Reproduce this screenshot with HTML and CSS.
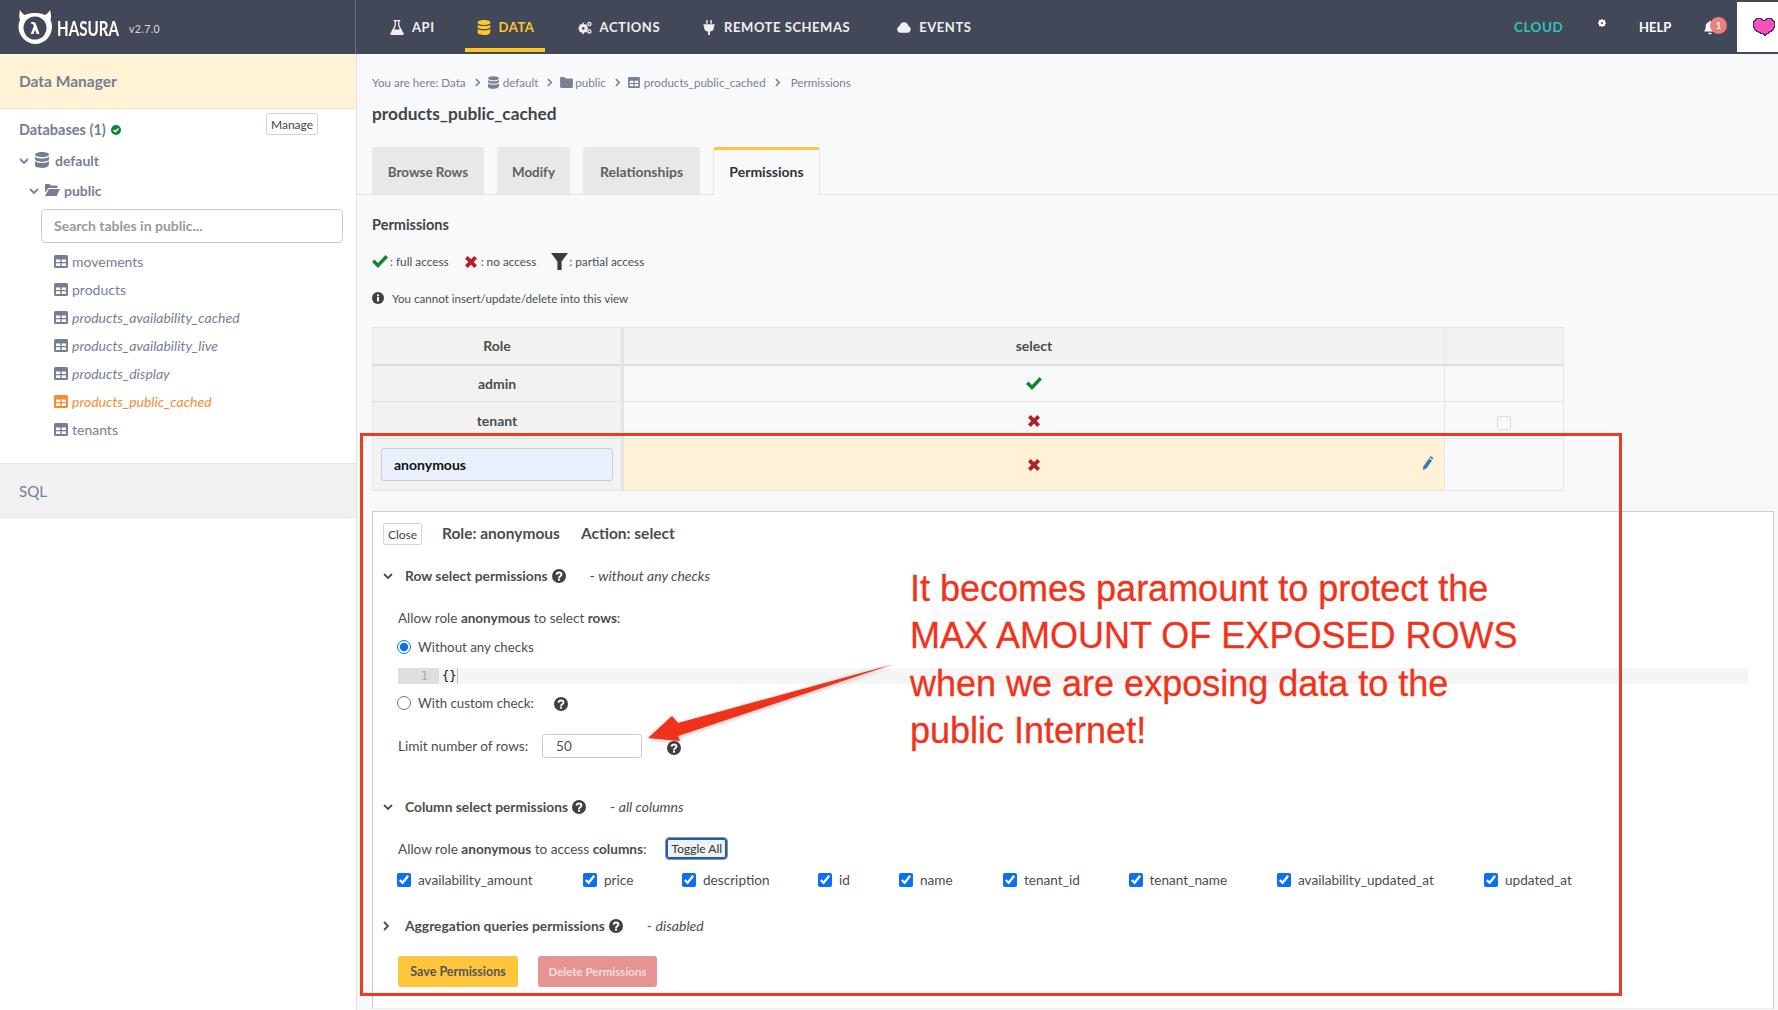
FILE: index.html
```html
<!DOCTYPE html>
<html>
<head>
    <title>Hasura Console</title>
    <link rel="stylesheet" href="styles.css">
</head>
<body>
<svg class="defs" width="0" height="0">
    <symbol id="i-db" viewBox="0 0 14 16"><path fill="currentColor" d="M7 0c3.900 0 7 1.100 7 2.600S10.900 5.200 7 5.200 0 4 0 2.600 3.100 0 7 0zM0 4.700c1.300 1.200 4 1.800 7 1.800s5.700-.6 7-1.800v2.500C14 8.600 10.900 9.700 7 9.700S0 8.600 0 7.200zM0 9.200C1.300 10.400 4 11 7 11s5.700-.6 7-1.800v2.400C14 15 10.900 16 7 16s-7-1-7-2.400z"/></symbol>
    <symbol id="i-table" viewBox="0 0 14 13"><path fill="currentColor" fill-rule="evenodd" d="M1.500 0h11A1.500 1.500 0 0 1 14 1.500v10a1.500 1.500 0 0 1-1.500 1.500h-11A1.500 1.500 0 0 1 0 11.500v-10A1.500 1.500 0 0 1 1.500 0zM2 4.500V7h4.300V4.500zm5.700 0V7H12V4.500zM2 8.300v2.700h4.300V8.300zm5.700 0v2.700H12V8.300z"/></symbol>
    <symbol id="i-folder" viewBox="0 0 14 12"><path fill="currentColor" d="M1.300 0h3.400l1.400 1.600h6.600c.7 0 1.300.6 1.300 1.300v7.800c0 .7-.6 1.300-1.300 1.300H1.300C.6 12 0 11.400 0 10.700V1.300C0 .6.600 0 1.300 0z"/></symbol>
    <symbol id="i-open" viewBox="0 0 15 12"><path fill="currentColor" d="M1 0h3.500L6 1.600h5.500c.6 0 1 .4 1 1V4H3.500L0 8.800V1C0 .4.400 0 1 0zM3.900 5H15l-3.300 7H0z"/></symbol>
    <symbol id="i-help" viewBox="0 0 16 16"><circle cx="8" cy="8" r="8" fill="currentColor"/><path fill="none" stroke="#fff" stroke-width="2.200" d="M5.200 6.300C5.400 4.700 6.600 4 8 4c1.600 0 2.800 1 2.800 2.300 0 2-2.800 2-2.800 3.900"/><rect x="6.800" y="11" width="2.400" height="2.300" fill="#fff"/></symbol>
    <symbol id="i-chev" viewBox="0 0 10 7"><path fill="none" stroke="currentColor" stroke-width="1.800" d="M1 1l4 4 4-4"/></symbol>
    <symbol id="i-right" viewBox="0 0 7 10"><path fill="none" stroke="currentColor" stroke-width="1.800" d="M1 1l4 4-4 4"/></symbol>
    <symbol id="i-check" viewBox="0 0 16 13"><path fill="currentColor" d="M0 7l2.500-2.400 3.500 3.500L13.500 0 16 2.400 6 13z"/></symbol>
    <symbol id="i-x" viewBox="0 0 12 12"><path fill="currentColor" d="M2.700 0L6 3.300 9.300 0 12 2.700 8.700 6 12 9.300 9.300 12 6 8.700 2.700 12 0 9.300 3.300 6 0 2.700z"/></symbol>
</svg>

<header class="topbar">
    <div class="brand">
        <svg class="logo" viewBox="0 0 34 36">
            <path fill="#fff" d="M2 1c2 3 3 4 5 5 3-1.500 6.500-2 10-2s7 .5 10 2c2-1 3-2 5-5 1 4 1.500 7 .5 10 1 2 1.500 4.500 1.500 7 0 9-7.500 17-16.500 17S.500 27 .500 18c0-2.500.5-5 1.500-7C1 8 1 5 2 1z"/>
            <circle cx="17" cy="19" r="11.500" fill="#434859"/>
            <text x="17" y="25" class="logo-l">λ</text>
        </svg>
        <span class="brand-name">HASURA</span>
        <span class="brand-ver">v2.7.0</span>
    </div>
    <nav class="nav">
        <a class="nav-item nav-api">
            <svg class="nav-ico" viewBox="0 0 14 16"><path fill="currentColor" d="M3.500 0h7v1.300H9.600v4.500L14 14c.5 1-.2 2-1.200 2H1.200C.2 16-.5 15 0 14l4.400-8.200V1.300h-.9zm2.300 1.300V6.200L4 10h6L8.200 6.200V1.300z"/></svg>API</a>
        <a class="nav-item nav-data active">
            <svg class="nav-ico" viewBox="0 0 14 16"><use href="#i-db"/></svg>DATA</a>
        <a class="nav-item nav-actions">
            <svg class="nav-ico" viewBox="0 0 16 14"><circle cx="6" cy="8" r="3.700" fill="none" stroke="currentColor" stroke-width="2.600"/><path stroke="currentColor" stroke-width="1.800" d="M6 1.500v13M.5 8h11M2 4l8 8M10 4l-8 8"/><circle cx="6" cy="8" r="1.500" fill="#434859"/><circle cx="13" cy="3" r="1.800" fill="none" stroke="currentColor" stroke-width="1.500"/><circle cx="13" cy="11.500" r="1.800" fill="none" stroke="currentColor" stroke-width="1.500"/></svg>ACTIONS</a>
        <a class="nav-item nav-remote">
            <svg class="nav-ico" viewBox="0 0 12 16"><path fill="currentColor" d="M3 0h1.500v4H3zM7.500 0H9v4H7.500zM0 4.500h12V6h-.8v2.500c0 2-2 3.500-4.200 3.800V16H5v-3.700C2.800 12 .8 10.500.8 8.500V6H0z"/></svg>REMOTE SCHEMAS</a>
        <a class="nav-item nav-events">
            <svg class="nav-ico" viewBox="0 0 16 12"><path fill="currentColor" d="M4 12a4 4 0 0 1-1-7.800C3.400 1.800 5.500 0 8 0c2.600 0 4.700 1.800 5 4.300A4 4 0 0 1 12.500 12z"/></svg>EVENTS</a>
    </nav>
    <div class="nav-right">
        <a class="cloud">CLOUD</a>
        <svg class="gear" viewBox="0 0 10 10"><circle cx="5" cy="5" r="3" fill="none" stroke="#fff" stroke-width="2"/><path stroke="#fff" stroke-width="1.600" d="M5 0v10M0 5h10M1.500 1.500l7 7M8.500 1.500l-7 7"/><circle cx="5" cy="5" r="1.300" fill="#434859"/></svg>
        <a class="help">HELP</a>
        <div class="bell">
            <svg class="bell-ico" viewBox="0 0 14 16"><path fill="#fff" d="M7 0c.6 0 1 .4 1 1v.6c2.300.5 4 2.500 4 5 0 3 .6 4.500 2 6H0c1.400-1.500 2-3 2-6 0-2.500 1.700-4.500 4-5V1c0-.6.400-1 1-1zM5 14h4c0 1.200-.9 2-2 2s-2-.8-2-2z"/></svg>
            <span class="badge">1</span>
        </div>
        <div class="heart-box">
            <svg class="heart" viewBox="0 0 23 20" shape-rendering="crispEdges"><path fill="#f553b8" stroke="#4b2a8c" stroke-width="1" d="M1 4h1V3h1V2h1V1h5v1h1v1h3V2h1V1h5v1h1v1h1v1h1v6h-1v2h-1v1h-1v1h-2v1h-1v1h-2v1h-1v1h-1v-1h-1v-1H8v-1H6v-1H4v-1H3v-1H2v-2H1z"/></svg>
        </div>
    </div>
</header>

<div class="page">
    <aside class="sidebar">
        <div class="side-title">Data Manager</div>
        <div class="db-head">
            <span class="db-label">Databases (1)
                <svg class="db-ok" viewBox="0 0 10 10"><circle cx="5" cy="5" r="5" fill="#0b8a2c"/><path fill="none" stroke="#fff" stroke-width="1.600" d="M2.700 5.100l1.700 1.600 3-3.200"/></svg>
            </span>
            <button class="btn-manage">Manage</button>
        </div>
        <div class="tree-row tree-default">
            <svg class="tree-chev"><use href="#i-chev"/></svg>
            <svg class="tree-db"><use href="#i-db"/></svg>
            <span>default</span>
        </div>
        <div class="tree-row tree-public">
            <svg class="tree-chev"><use href="#i-chev"/></svg>
            <svg class="tree-open"><use href="#i-open"/></svg>
            <span>public</span>
        </div>
        <div class="side-search">Search tables in public...</div>
        <ul class="table-list">
            <li><svg class="tbl-ico"><use href="#i-table"/></svg>movements</li>
            <li><svg class="tbl-ico"><use href="#i-table"/></svg>products</li>
            <li class="view"><svg class="tbl-ico"><use href="#i-table"/></svg>products_availability_cached</li>
            <li class="view"><svg class="tbl-ico"><use href="#i-table"/></svg>products_availability_live</li>
            <li class="view"><svg class="tbl-ico"><use href="#i-table"/></svg>products_display</li>
            <li class="view current"><svg class="tbl-ico"><use href="#i-table"/></svg>products_public_cached</li>
            <li><svg class="tbl-ico"><use href="#i-table"/></svg>tenants</li>
        </ul>
        <div class="side-sql">SQL</div>
    </aside>

    <main class="main">
        <div class="crumbs">
            <span>You are here: Data</span>
            <svg class="c-sep"><use href="#i-right"/></svg>
            <svg class="c-db"><use href="#i-db"/></svg><span>default</span>
            <svg class="c-sep"><use href="#i-right"/></svg>
            <svg class="c-folder"><use href="#i-folder"/></svg><span>public</span>
            <svg class="c-sep"><use href="#i-right"/></svg>
            <svg class="c-table"><use href="#i-table"/></svg><span>products_public_cached</span>
            <svg class="c-sep"><use href="#i-right"/></svg>
            <span class="c-last">Permissions</span>
        </div>
        <h1 class="page-title">products_public_cached</h1>

        <div class="tabs">
            <a class="tab tab-browse">Browse Rows</a>
            <a class="tab tab-modify">Modify</a>
            <a class="tab tab-rel">Relationships</a>
            <a class="tab tab-perm active">Permissions</a>
        </div>

        <h2 class="sub-title">Permissions</h2>
        <div class="legend">
            <svg class="lg-check"><use href="#i-check"/></svg><span>: full access</span>
            <svg class="lg-x"><use href="#i-x"/></svg><span>: no access</span>
            <svg class="lg-filter" viewBox="0 0 16 16"><path fill="#3c3c3c" d="M0 0h16L10 8v8H6V8z"/></svg><span>: partial access</span>
        </div>
        <div class="info">
            <svg class="info-ico" viewBox="0 0 12 12"><circle cx="6" cy="6" r="6" fill="#3f3f3f"/><rect x="5" y="5" width="2" height="4.500" fill="#fff"/><rect x="5" y="2.400" width="2" height="1.800" fill="#fff"/></svg>
            You cannot insert/update/delete into this view
        </div>

        <table class="perm-table">
            <colgroup><col class="col-role"><col class="col-sel"><col class="col-x"></colgroup>
            <tr class="r-head"><th class="role">Role</th><th>select</th><th></th></tr>
            <tr class="r-row"><td class="role">admin</td><td class="mid"><svg class="t-check"><use href="#i-check"/></svg></td><td></td></tr>
            <tr class="r-row"><td class="role">tenant</td><td class="mid"><svg class="t-x"><use href="#i-x"/></svg></td><td class="mid"><span class="ghost-box"></span></td></tr>
            <tr class="r-new">
                <td class="role"><div class="role-input">anonymous</div></td>
                <td class="mid active-cell"><svg class="t-x"><use href="#i-x"/></svg>
                    <svg class="pencil" viewBox="0 0 12 14"><path fill="#3a78b8" d="M8.500 0l3 2-1 1.600-3-2zM7 2.500l3 2-5.500 8L1 14l.3-3.400z"/></svg>
                </td>
                <td></td>
            </tr>
        </table>

        <section class="panel">
            <div class="panel-head">
                <button class="btn-close">Close</button>
                <span class="ph-role">Role: anonymous</span>
                <span>Action: select</span>
            </div>

            <div class="sec-head s-row">
                <svg class="sec-chev"><use href="#i-chev"/></svg>
                <b>Row select permissions</b>
                <svg class="help-ico"><use href="#i-help"/></svg>
                <span class="sec-note">- <i>without any checks</i></span>
            </div>
            <div class="sec-body">
                <div class="l-allow">Allow role <b>anonymous</b> to select <b>rows</b>:</div>
                <label class="l-radio"><input type="radio" name="chk" checked>Without any checks</label>
                <div class="code"><span class="gutter">1</span><span class="braces">{}</span></div>
                <label class="l-custom"><input type="radio" name="chk">With custom check:<svg class="help-ico custom-help"><use href="#i-help"/></svg></label>
                <div class="l-limit">Limit number of rows:<span class="limit-input">50</span><svg class="help-ico limit-help"><use href="#i-help"/></svg></div>
            </div>

            <div class="sec-head s-col">
                <svg class="sec-chev"><use href="#i-chev"/></svg>
                <b>Column select permissions</b>
                <svg class="help-ico"><use href="#i-help"/></svg>
                <span class="sec-note">- <i>all columns</i></span>
            </div>
            <div class="sec-body">
                <div class="l-columns"><span>Allow role <b>anonymous</b> to access <b>columns</b>:</span><button class="btn-toggle">Toggle All</button></div>
                <div class="col-checks">
                    <label><input type="checkbox" checked>availability_amount</label>
                    <label><input type="checkbox" checked>price</label>
                    <label><input type="checkbox" checked>description</label>
                    <label><input type="checkbox" checked>id</label>
                    <label><input type="checkbox" checked>name</label>
                    <label><input type="checkbox" checked>tenant_id</label>
                    <label><input type="checkbox" checked>tenant_name</label>
                    <label><input type="checkbox" checked>availability_updated_at</label>
                    <label><input type="checkbox" checked>updated_at</label>
                </div>
            </div>

            <div class="sec-head s-agg">
                <svg class="sec-right"><use href="#i-right"/></svg>
                <b>Aggregation queries permissions</b>
                <svg class="help-ico"><use href="#i-help"/></svg>
                <span class="sec-note">- <i>disabled</i></span>
            </div>
            <div class="sec-body actions">
                <button class="btn-save">Save Permissions</button>
                <button class="btn-delete">Delete Permissions</button>
            </div>
        </section>
    </main>
</div>

<!-- annotation drawn over the screenshot -->
<div class="mark-box"></div>
<svg class="mark-arrow" viewBox="0 0 1778 1010"><path fill="#f0321a" d="M894 664L678 723 672 716 648 738 680 741 678 736z"/></svg>
<div class="mark-text">It becomes paramount to protect the<br>MAX AMOUNT OF EXPOSED ROWS<br>when we are exposing data to the<br>public Internet!</div>
</body>
</html>
```

FILE: styles.css
```css
/* Reset */
body, h1, h2, ul {
    margin: 0;
    padding: 0;
}

body {
    width: 1778px;
    height: 1010px;
    overflow: hidden;
    position: relative;
    background-color: #f8f9fb;
    color: #4d4d4d;
    font-family: Lato, "Liberation Sans", sans-serif;
    font-size: 14px;
}

button {
    font-family: inherit;
}

.defs {
    position: absolute;
}

/* Top bar */
.topbar {
    display: flex;
    height: 54px;
    background-color: #434859;
    color: #fff;
}

.brand {
    width: 356px;
    flex: none;
    display: flex;
    align-items: center;
    padding-left: 18px;
    box-sizing: border-box;
    border-right: 1px solid #6b7080;
}

.logo {
    width: 34px;
    height: 36px;
    flex: none;
}

.logo-l {
    fill: #fff;
    font-family: "DejaVu Sans", sans-serif;
    font-size: 15px;
    font-weight: bold;
    text-anchor: middle;
}

.brand-name {
    width: 62px;
    margin-left: 5px;
    font-size: 21px;
    font-weight: 700;
    transform: scaleX(.72);
    transform-origin: left center;
    white-space: nowrap;
}

.brand-ver {
    margin-left: 10px;
    margin-top: 4px;
    font-size: 10.500px;
    color: #ddd;
    letter-spacing: .4px;
}

.nav {
    display: flex;
    flex: 1;
}

.nav-item {
    position: relative;
    display: flex;
    align-items: center;
    height: 54px;
    font-size: 13px;
    font-weight: 700;
    letter-spacing: .55px;
    color: #f0f0f0;
    white-space: nowrap;
}

.nav-ico {
    flex: none;
    width: 14px;
    height: 15px;
    margin-right: 8px;
}

.nav-api { margin-left: 34px; }
.nav-data {
    width: 80px;
    box-sizing: border-box;
    margin-left: 30px;
    padding-left: 12px;
    color: #ffc627;
}
.nav-data::after {
    content: "";
    position: absolute;
    left: 0;
    right: 0;
    top: 48px;
    height: 4px;
    background-color: #ffc627;
}
.nav-actions { margin-left: 33px; }
.nav-remote { margin-left: 42px; }
.nav-events { margin-left: 47px; }

.nav-right {
    display: flex;
    align-items: center;
    height: 54px;
}

.cloud {
    width: 50px;
    font-size: 13.500px;
    font-weight: 700;
    letter-spacing: .5px;
    color: #2cc5b5;
    white-space: nowrap;
}

.gear {
    width: 8px;
    height: 8px;
    margin: -8px 0 0 34px;
}

.help {
    width: 30px;
    margin-left: 33px;
    font-size: 13px;
    font-weight: 700;
    white-space: nowrap;
}

.bell {
    position: relative;
    width: 33px;
    height: 20px;
    margin-left: 35px;
}

.bell-ico {
    width: 12px;
    height: 15px;
    margin-top: 3px;
}

.badge {
    position: absolute;
    left: 6px;
    top: 0;
    width: 17px;
    height: 17px;
    border-radius: 50%;
    background-color: #ef7f78;
    font-size: 9px;
    font-weight: 700;
    line-height: 17px;
    text-align: center;
}

.heart-box {
    width: 41px;
    height: 50px;
    margin: 0 0 2px 0;
    align-self: flex-end;
    background-color: #fff;
    overflow: hidden;
}

.heart {
    width: 23px;
    height: 20px;
    margin: 15px 0 0 15px;
}

/* Page */
.page {
    display: flex;
    height: 956px;
}

/* Sidebar */
.sidebar {
    width: 357px;
    flex: none;
    box-sizing: border-box;
    border-right: 1px solid #e3e3e3;
    background-color: #fff;
    color: #767e93;
}

.side-title {
    height: 55px;
    box-sizing: border-box;
    padding-left: 19px;
    background-color: #fff3d5;
    border-bottom: 1px solid #ebe7da;
    font-size: 15.500px;
    font-weight: 700;
    line-height: 54px;
}

.db-head {
    display: flex;
    justify-content: space-between;
    padding: 4px 38px 0 19px;
}

.db-label {
    margin-top: 8px;
    font-size: 14.500px;
    font-weight: 700;
}

.db-ok {
    width: 10px;
    height: 10px;
    margin-left: 2px;
}

.btn-manage {
    width: 52px;
    height: 22px;
    padding: 0;
    background-color: #fff;
    border: 1px solid #d5d5d5;
    border-radius: 2px;
    font-size: 12px;
    color: #444;
}

.tree-row {
    display: flex;
    align-items: center;
    font-weight: 700;
    font-size: 14px;
}

.tree-chev {
    width: 10px;
    height: 7px;
    margin-top: 3px;
    flex: none;
}

.tree-default {
    height: 20px;
    margin-top: 12px;
    padding-left: 19px;
}

.tree-db {
    width: 14px;
    height: 16px;
    margin: 0 6px 0 6px;
}

.tree-public {
    height: 20px;
    margin-top: 10px;
    padding-left: 29px;
}

.tree-open {
    width: 15px;
    height: 12px;
    margin: 0 4px 0 6px;
}

.side-search {
    width: 302px;
    height: 34px;
    box-sizing: border-box;
    margin: 9px 0 0 41px;
    padding-left: 12px;
    background-color: #fff;
    border: 1px solid #ccc;
    border-radius: 4px;
    font-size: 14px;
    font-weight: 700;
    line-height: 32px;
    color: #999;
}

.table-list {
    list-style: none;
    margin-top: 4px;
    padding: 0 0 20px 54px;
}

.table-list li {
    display: flex;
    align-items: center;
    height: 28px;
    font-size: 14px;
}

.table-list .view {
    font-style: italic;
}

.table-list .current {
    color: #f58b35;
}

.tbl-ico {
    width: 14px;
    height: 13px;
    margin-right: 4px;
    flex: none;
}

.side-sql {
    height: 55px;
    box-sizing: border-box;
    padding-left: 19px;
    background-color: #f1f1f1;
    border-top: 1px solid #e5e5e5;
    border-bottom: 1px solid #e8e8e8;
    font-size: 15px;
    line-height: 54px;
}

/* Main column */
.main {
    flex: 1;
    min-width: 0;
    padding: 19px 4px 0 15px;
    overflow: hidden;
}

.crumbs {
    display: flex;
    align-items: center;
    height: 18px;
    font-size: 11.600px;
    color: #788095;
    white-space: nowrap;
}

.crumbs svg { flex: none; }

.c-sep {
    width: 6px;
    height: 9px;
    margin: 0 7px 0 9px;
}

.c-db {
    width: 11px;
    height: 13px;
    margin-right: 4px;
}

.c-folder {
    width: 13px;
    height: 11px;
    margin-right: 2px;
}

.c-table {
    width: 12px;
    height: 11px;
    margin-right: 4px;
}

.c-last {
    margin-left: 3px;
}

.page-title {
    height: 20px;
    margin-top: 13px;
    font-size: 17.300px;
    font-weight: 700;
    line-height: 20px;
    color: #444;
}

.tabs {
    display: flex;
    height: 48px;
    box-sizing: border-box;
    margin: 23px -4px 0 -15px;
    padding-left: 15px;
    border-bottom: 1px solid #e4e4e4;
}

.tab {
    height: 47px;
    box-sizing: border-box;
    background-color: #e8e8e8;
    border-radius: 3px 3px 0 0;
    font-size: 14px;
    font-weight: 700;
    line-height: 50px;
    text-align: center;
    color: #5f5f5f;
}

.tab-browse { width: 112px; font-size: 13.400px; }
.tab-modify { width: 73px; margin-left: 13px; font-size: 13.400px; }
.tab-rel { width: 117px; margin-left: 13px; }
.tab-perm {
    width: 107px;
    height: 48px;
    margin-left: 13px;
    background-color: #f8f9fb;
    border: 1px solid #e4e4e4;
    border-top: 3px solid #fec53d;
    border-bottom: none;
    line-height: 43px;
    color: #333;
}

.sub-title {
    height: 20px;
    margin-top: 20px;
    font-size: 14.500px;
    font-weight: 700;
    line-height: 20px;
    color: #444;
}

.legend {
    display: flex;
    align-items: center;
    height: 20px;
    margin-top: 16px;
    font-size: 11.800px;
}

.lg-check { width: 16px; height: 13px; margin-right: 2px; color: #0b8a2c; }
.lg-x { width: 12px; height: 12px; margin: 2px 4px 0 16px; color: #b0202a; }
.lg-filter { width: 17px; height: 17px; margin: 0 1px 0 15px; }

.info {
    display: flex;
    align-items: center;
    height: 18px;
    margin-top: 18px;
    font-size: 11.600px;
}

.info-ico {
    width: 12px;
    height: 12px;
    margin-right: 8px;
}

/* Permissions table */
.perm-table {
    width: 1192px;
    margin-top: 20px;
    table-layout: fixed;
    border-collapse: collapse;
    border: 1px solid #e2e2e2;
}

.col-role { width: 250px; }
.col-x { width: 119px; }

.perm-table th,
.perm-table td {
    padding: 0;
    border: 1px solid #e5e5e5;
    font-size: 14px;
    font-weight: 700;
    text-align: center;
}

.perm-table .role {
    background-color: #f2f2f2;
    border-right: 3px double #ddd;
}

.r-head { height: 37px; }
.r-head th {
    background-color: #f2f2f2;
    border-bottom: 2px solid #ddd;
}
.r-row { height: 37px; }
.r-new { height: 52px; }

.mid {
    position: relative;
}

.t-check { width: 16px; height: 13px; margin-bottom: 2px; color: #0b8a2c; vertical-align: middle; }
.t-x { width: 12px; height: 12px; margin-bottom: 2px; color: #b0202a; vertical-align: middle; }

.ghost-box {
    display: inline-block;
    width: 12px;
    height: 12px;
    margin-top: 5px;
    border: 1px solid #dcdcdc;
    border-radius: 2px;
    vertical-align: middle;
}

.role-input {
    height: 33px;
    box-sizing: border-box;
    margin: 0 8px;
    padding-left: 12px;
    background-color: #e8f0fd;
    border: 1px solid #ccc;
    border-radius: 3px;
    line-height: 31px;
    text-align: left;
    color: #111;
}

.active-cell {
    background-color: #fff2d6;
}

.pencil {
    position: absolute;
    right: 10px;
    top: 17px;
    width: 12px;
    height: 14px;
}

/* Edit panel */
.panel {
    height: 498px;
    box-sizing: border-box;
    margin-top: 20px;
    padding: 11px 25px 0 10px;
    background-color: #fff;
    border: 1px solid #ccc;
    border-bottom-color: #eee;
}

.panel-head {
    display: flex;
    align-items: center;
    height: 22px;
    font-size: 15.500px;
    font-weight: 700;
}

.panel-head span {
    margin-top: -3px;
}

.btn-close {
    width: 39px;
    height: 22px;
    padding: 0;
    background-color: #fff;
    border: 1px solid #d5d5d5;
    border-radius: 2px;
    font-size: 12px;
    font-weight: 400;
    color: #444;
}

.ph-role {
    margin: 0 21px 0 20px;
}

.sec-head {
    display: flex;
    align-items: center;
    height: 20px;
    font-size: 13.800px;
}

.sec-head b {
    margin-left: 12px;
}

.sec-chev {
    width: 10px;
    height: 7px;
    margin-top: 2px;
    flex: none;
}

.sec-right {
    width: 7px;
    height: 10px;
    margin: 2px 3px 0 0;
    flex: none;
}

.help-ico {
    width: 14px;
    height: 14px;
    flex: none;
    margin-left: 4px;
    margin-top: 1px;
    color: #404040;
}

.sec-note {
    margin-left: 24px;
    font-size: 14px;
}

.s-row { margin-top: 20px; }
.s-col { margin-top: 38px; }
.s-agg { margin-top: 25px; }

.sec-body {
    padding-left: 15px;
    font-size: 13.600px;
}

.l-allow {
    height: 20px;
    margin-top: 23px;
    line-height: 20px;
    font-size: 13.500px;
}

.l-radio,
.l-custom {
    display: flex;
    align-items: center;
    height: 20px;
    margin-top: 9px;
    font-size: 13.300px;
}

.sec-body input[type=radio],
.sec-body input[type=checkbox] {
    width: 14px;
    height: 14px;
    margin: 0 7px 0 -1px;
    accent-color: #0b6ff2;
}

.code {
    display: flex;
    height: 16px;
    margin-top: 11px;
    background-color: #f5f5f5;
    font-family: "DejaVu Sans Mono", monospace;
    font-size: 12px;
    line-height: 16px;
}

.gutter {
    width: 41px;
    padding-right: 11px;
    box-sizing: border-box;
    background-color: #dedede;
    text-align: right;
    color: #aaa;
}

.braces {
    margin-left: 2px;
    padding: 0 1px;
    color: #111;
    border-right: 1px solid #bbb;
}

.custom-help { margin-left: 20px; margin-top: 2px; }

.l-limit {
    display: flex;
    align-items: center;
    height: 24px;
    margin-top: 21px;
}

.limit-input {
    width: 100px;
    height: 24px;
    box-sizing: border-box;
    margin-left: 14px;
    padding-left: 13px;
    border: 1px solid #ccc;
    border-radius: 3px;
    line-height: 22px;
}

.limit-help { margin-left: 25px; margin-top: 3px; }

.l-columns {
    display: flex;
    align-items: center;
    height: 21px;
    margin-top: 22px;
}

.btn-toggle {
    width: 61px;
    height: 21px;
    margin-left: 20px;
    padding: 0;
    background-color: #eef1f6;
    border: 2px solid #1d5fae;
    outline: 1px solid #8a94a6;
    border-radius: 3px;
    font-size: 12px;
    color: #333;
}

.col-checks {
    display: grid;
    grid-template-columns: 186px 99px 136px 81px 104px 125.500px 148.500px 207px auto;
    height: 20px;
    margin-top: 11px;
}

.col-checks label {
    display: flex;
    align-items: center;
    white-space: nowrap;
}

.actions {
    display: flex;
    align-items: flex-start;
    gap: 20px;
    margin-top: 21px;
}

.actions button {
    height: 31px;
    padding: 0;
    border: none;
    border-radius: 3px;
    font-weight: 700;
}

.btn-save {
    width: 120px;
    background-color: #fec53d;
    font-size: 12.500px;
    color: #555;
}

.btn-delete {
    width: 119px;
    background-color: #e59393;
    font-size: 11.500px;
    color: #f7dede;
}

/* Red annotation */
.mark-box {
    position: absolute;
    left: 360px;
    top: 433px;
    width: 1262px;
    height: 563px;
    box-sizing: border-box;
    border: 3px solid #ee3a1d;
}

.mark-arrow {
    position: absolute;
    left: 0;
    top: 0;
    width: 1778px;
    height: 1010px;
    pointer-events: none;
    filter: drop-shadow(0 1px 2px rgba(0, 0, 0, .3));
}

.mark-text {
    position: absolute;
    left: 910px;
    top: 565px;
    font-family: "Liberation Sans", Arial, sans-serif;
    font-size: 36px;
    line-height: 47.300px;
    white-space: nowrap;
    color: #f0331a;
    -webkit-text-stroke: .3px #f0331a;
}
```
